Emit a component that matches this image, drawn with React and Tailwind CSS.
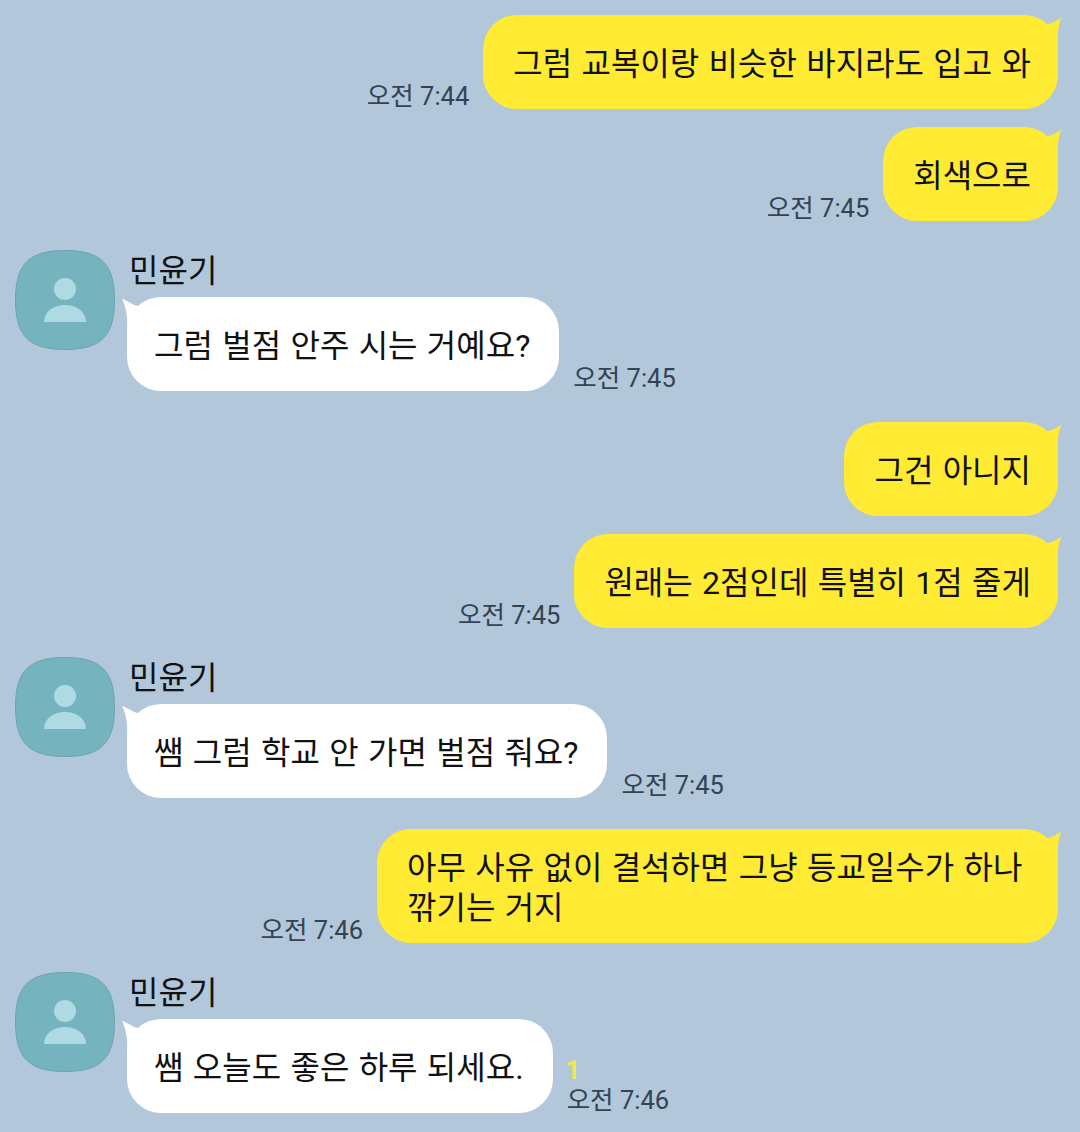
const FONT = '[font-family:Roboto,"Noto_Sans_CJK_KR",sans-serif]'

function Time({ children, className = '' }) {
  return <span className={`text-[25.5px] leading-[30px] text-[#344353] whitespace-nowrap mb-[-2px] ${className}`}>{children}</span>
}

function Mine({ time, mt, width, children }) {
  return (
    <div className={`flex justify-end items-end gap-[14px] pr-[22px] ${mt}`}>
      {time && <Time>{time}</Time>}
      <div className={`relative flex items-center min-h-[94px] bg-[#ffeb33] rounded-[34px] pl-[30px] pr-[27px] pt-[19px] pb-[15px] text-[32px] leading-[40px] [word-spacing:1.4px] text-[#111] whitespace-pre ${width}`}>
        {/* tail sits on the rounded corner */}
        <svg className="absolute right-[-6px] top-0" width="34" height="34" viewBox="0 0 34 34">
          <path d="M17 9C22 9 27 5 32 2C29 7 27.500 14 28 30L17 30Z" fill="#ffeb33" />
        </svg>
        <span className="relative">{children}</span>
      </div>
    </div>
  )
}

function Avatar() {
  return (
    <svg width="100" height="100" viewBox="0 0 100 100" className="shrink-0">
      <path d="M50 .5C86 .5 99.500 14 99.500 50S86 99.500 50 99.500.5 86 .5 50 14 .5 50 .5Z" fill="#75b3bf" stroke="#6aa5ae" />
      <circle cx="50" cy="39" r="11" fill="#aedbe3" />
      <path d="M29 72C29 62 38 55 50 55S71 62 71 72Z" fill="#aedbe3" />
    </svg>
  )
}

function Theirs({ mt, time, read, children }) {
  return (
    <div className={`flex gap-[12px] pl-[15px] ${mt}`}>
      <Avatar />
      <div>
        <div className="text-[32px] leading-[40px] text-[#111] mt-[1px] mb-[6px] ml-[2px]">민윤기</div>
        <div className="flex items-end gap-[14px]">
          <div className="relative flex items-center min-h-[94px] bg-white rounded-[34px] pl-[27px] pr-[29px] pt-[19px] pb-[15px] text-[32px] leading-[40px] [word-spacing:1.4px] text-[#111] whitespace-pre">
            <svg className="absolute left-[-5px] top-[2px]" width="30" height="30" viewBox="0 0 30 30">
              <path d="M0 0C5 1 10 6 16 7L16 30L5 30C6 18 4 8 0 0Z" fill="#fff" />
            </svg>
            <span className="relative">{children}</span>
          </div>
          <div className="flex flex-col">
            {read && <span className="text-[25.5px] leading-[30px] font-bold text-[#efe65e] -ml-px">1</span>}
            <Time>{time}</Time>
          </div>
        </div>
      </div>
    </div>
  )
}

export default function App() {
  return (
    <div className={`min-h-screen bg-[#b2c7da] pt-[15px] ${FONT}`}>
      <Mine time="오전 7:44">그럼 교복이랑 비슷한 바지라도 입고 와</Mine>
      <Mine time="오전 7:45" mt="mt-[18px]">회색으로</Mine>
      <Theirs time="오전 7:45" mt="mt-[29px]">그럼 벌점 안주 시는 거예요?</Theirs>
      <Mine mt="mt-[31px]">그건 아니지</Mine>
      <Mine time="오전 7:45" mt="mt-[18px]">원래는 2점인데 특별히 1점 줄게</Mine>
      <Theirs time="오전 7:45" mt="mt-[29px]">쌤 그럼 학교 안 가면 벌점 줘요?</Theirs>
      <Mine time="오전 7:46" mt="mt-[31px]" width="w-[681px]">{'아무 사유 없이 결석하면 그냥 등교일수가 하나\n깎기는 거지'}</Mine>
      <Theirs time="오전 7:46" mt="mt-[29px]" read>쌤 오늘도 좋은 하루 되세요.</Theirs>
    </div>
  )
}
